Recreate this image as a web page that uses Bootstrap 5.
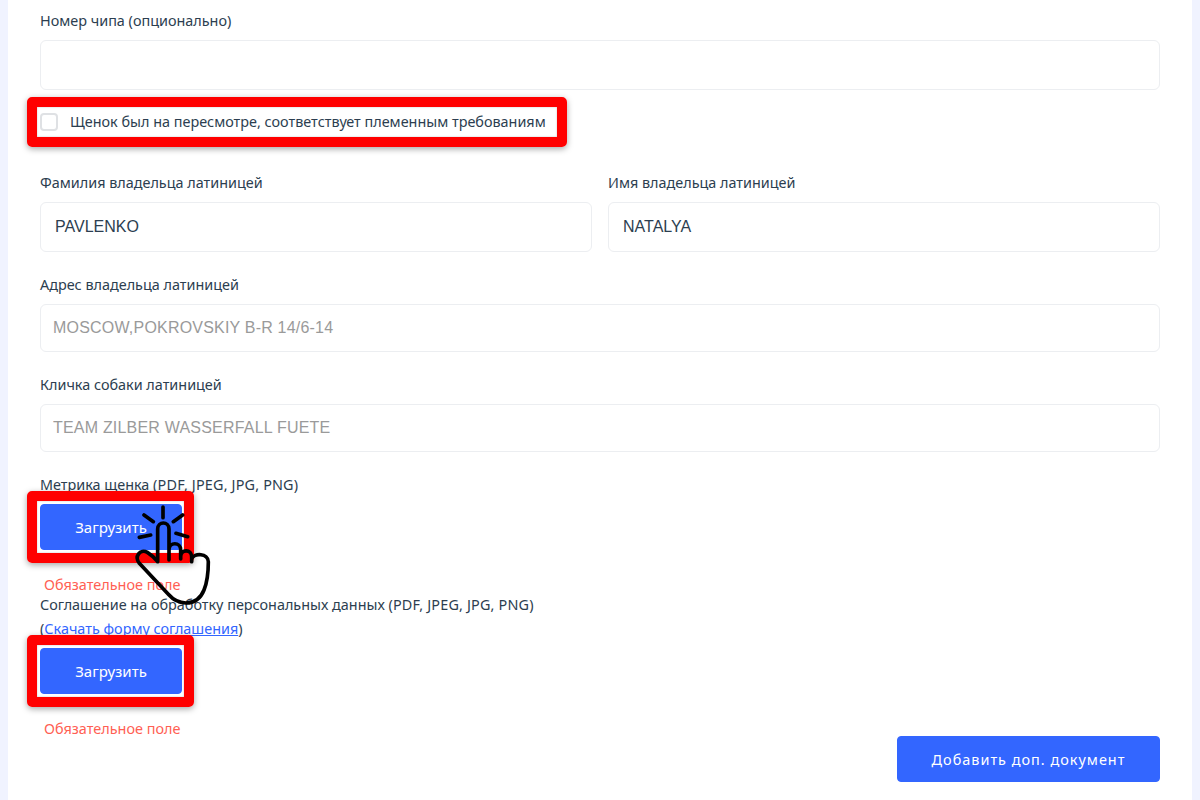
<!doctype html>
<html lang="ru">
<head>
<meta charset="utf-8">
<title>Форма</title>
<link rel="stylesheet" href="https://cdn.jsdelivr.net/npm/bootstrap@5.3.0/dist/css/bootstrap.min.css">
<style>
html, body { height: 100%; overflow: hidden; }
body { background: #f0f3ff; font-family: "Noto Sans", "Liberation Sans", sans-serif; font-size: 14.4px; color: #2c3e50; }
.sheet { margin: 0 8px; min-height: 100vh; background: #fff; padding: 9px 32px 0; }
.fld-label { display: block; line-height: 24px; margin-bottom: 7px; font-size: 14.4px; }
.fld-space { margin-top: 21px; }
.fmt-list { letter-spacing: .17px; }
.fld-input.form-control { height: 50px; border: 1px solid #eceef1; border-radius: 6px; font-family: "Liberation Sans", sans-serif; font-size: 16px; color: #2c3e50; padding: 0 14px; box-shadow: none; }
.fld-input.fld-short { height: 48px; padding: 0 12px; color: #9a9a9a; background: #fff; letter-spacing: .2px; }
.check-row { display: inline-flex; align-items: center; margin: 20px 0 37px; position: relative; height: 24px; }
.check-box.form-check-input { width: 18px; height: 18px; margin: 0 13px 0 0; border: 2px solid #dfe1e4; border-radius: 4px; float: none; }
.check-text { line-height: 24px; margin-left: -1px; }
.gap-row { --bs-gutter-x: 16px; }
.mark-box { position: absolute; border: 10px solid #f00; border-radius: 5px; box-shadow: 0 2px 6px rgba(0,0,0,.35), inset 0 0 2px rgba(0,0,0,.25); pointer-events: none; }
.check-mark { inset: -13px -21px -13px -13px; }
.btn-mark { inset: -13px -12px -13px -13px; }
.upload-wrap { position: relative; display: inline-block; vertical-align: top; }
.upload-btn.btn { width: 142px; height: 46px; padding: 0; background: #3366ff; border-color: #3366ff; color: #fff; font-size: 15px; border-radius: 4px; }
.err-text { color: #ff5f54; margin: 26px 0 -1px 4px; line-height: 18px; font-size: 14.45px; }
.doc-label { line-height: 24px; }
.doc-link { color: #3366ff; }
.tap-hand { position: absolute; left: 80px; top: -9px; width: 100px; height: 115px; overflow: visible; pointer-events: none; }
.add-row { margin-top: -2px; }
.add-btn.btn { width: 263px; height: 46px; padding: 2px 0 0; background: #3366ff; border-color: #3366ff; color: #fff; font-size: 14.45px; letter-spacing: 1px; border-radius: 4px; }
</style>
</head>
<body>
<div class="sheet">
  <label class="fld-label" for="chip">Номер чипа (опционально)</label>
  <input id="chip" class="form-control fld-input" type="text">
  <div class="check-row">
    <input id="rev" class="form-check-input check-box" type="checkbox">
    <label for="rev" class="check-text">Щенок был на пересмотре, соответствует племенным требованиям</label>
    <span class="mark-box check-mark"></span>
  </div>
  <div class="row gap-row">
    <div class="col-6">
      <label class="fld-label" for="ln">Фамилия владельца латиницей</label>
      <input id="ln" class="form-control fld-input" type="text" value="PAVLENKO">
    </div>
    <div class="col-6">
      <label class="fld-label" for="fn">Имя владельца латиницей</label>
      <input id="fn" class="form-control fld-input" type="text" value="NATALYA">
    </div>
  </div>
  <label class="fld-label fld-space" for="addr">Адрес владельца латиницей</label>
  <input id="addr" class="form-control fld-input fld-short" type="text" value="MOSCOW,POKROVSKIY B-R 14/6-14" readonly>
  <label class="fld-label fld-space" for="dog">Кличка собаки латиницей</label>
  <input id="dog" class="form-control fld-input fld-short" type="text" value="TEAM ZILBER WASSERFALL FUETE" readonly>
  <div class="fld-label fld-space">Метрика щенка <span class="fmt-list">(PDF, JPEG, JPG, PNG)</span></div>
  <div class="upload-wrap">
    <button type="button" class="btn upload-btn">Загрузить</button>
    <span class="mark-box btn-mark"></span>
    <svg class="tap-hand" viewBox="0 0 300 345" fill="none" stroke="#000" stroke-width="11" stroke-linecap="round" stroke-linejoin="round" aria-hidden="true">
      <path d="M129 36V68M72 60L100 80M188 60L160 80M58 127L92 120M168 115L203 125"/>
      <path d="M113 200V102C113 78 147 78 147 102V195M147 165C147 140 182 140 182 165V192M182 185C182 162 215 162 215 185V200M215 192C222 172 265 175 265 200C265 235 262 260 252 285C242 310 222 324 198 324C175 324 160 315 145 298L58 205C42 185 60 160 82 172C95 180 105 190 113 200"/>
    </svg>
  </div>
  <div class="err-text">Обязательное поле</div>
  <div class="doc-label">Соглашение на обработку персональных данных <span class="fmt-list">(PDF, JPEG, JPG, PNG)</span></div>
  <div class="fld-label">(<a href="#" class="doc-link">Скачать форму соглашения</a>)</div>
  <div class="upload-wrap">
    <button type="button" class="btn upload-btn">Загрузить</button>
    <span class="mark-box btn-mark"></span>
  </div>
  <div class="err-text">Обязательное поле</div>
  <div class="d-flex justify-content-end add-row">
    <button type="button" class="btn add-btn">Добавить доп. документ</button>
  </div>
</div>
<script src="https://cdn.jsdelivr.net/npm/bootstrap@5.3.0/dist/js/bootstrap.bundle.min.js"></script>
</body>
</html>
